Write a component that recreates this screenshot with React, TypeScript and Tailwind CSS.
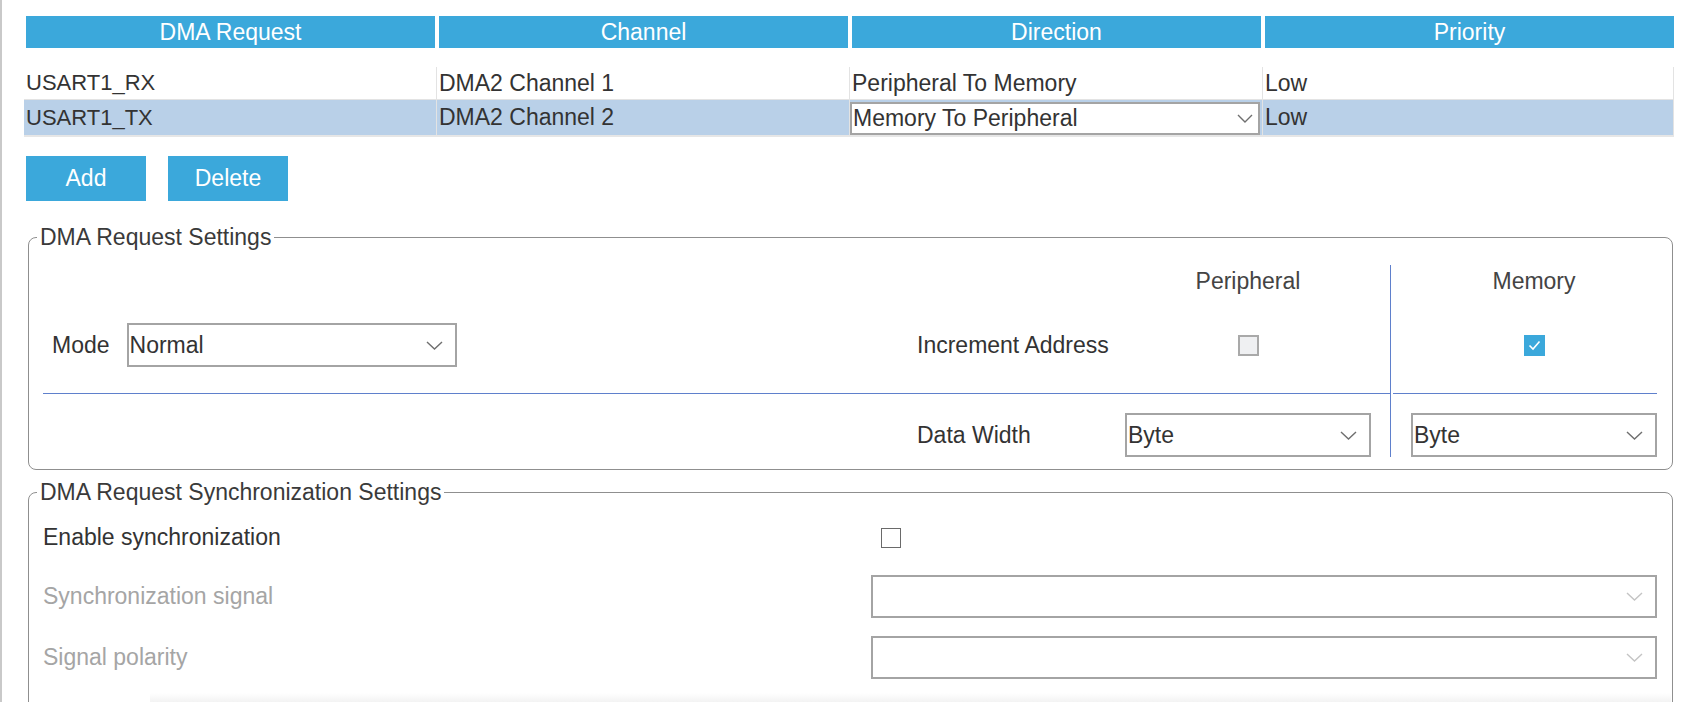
import React from "react";

const LINE = "bg-[#5f80cc]";

function Chevron({ color = "#6f6f6f", w = 17 }: { color?: string; w?: number }) {
  return (
    <svg width={w} height="9" viewBox={`0 0 ${w} 9`} fill="none">
      <path d={`M1 1 L${w / 2} 8 L${w - 1} 1`} stroke={color} strokeWidth="1.4" />
    </svg>
  );
}

function Select({
  text = "",
  className = "",
  disabled = false,
}: {
  text?: string;
  className?: string;
  disabled?: boolean;
}) {
  return (
    <div
      className={`flex items-center justify-between bg-white border-2 border-[#a4a4a4] pl-[1px] pr-[12px] ${className}`}
    >
      <span className="leading-none text-[#333]">{text}</span>
      <Chevron color={disabled ? "#c4c4c4" : "#6f6f6f"} />
    </div>
  );
}

export default function App() {
  const cols = "grid grid-cols-[874px_208px_246px_19px]";
  return (
    <div className="relative w-[1691px] h-[702px] overflow-hidden bg-white shadow-[inset_2px_0_0_#c9c9c9] font-['Liberation_Sans',Arial,sans-serif] text-[23px] text-[#333]">
      <div className="pt-[16px]">
        {/* Header */}
        <div className="ml-[26px] w-[1648px] h-[32px] grid grid-cols-4 gap-x-[4px]">
          {["DMA Request", "Channel", "Direction", "Priority"].map((h) => (
            <div key={h} className="bg-[#3ba8db] text-white flex items-center justify-center leading-none">
              {h}
            </div>
          ))}
        </div>

        {/* Rows */}
        <div className="mt-[19px] ml-[24px] w-[1650px]">
          <div className="grid grid-cols-[413px_413px_413px_411px] h-[33px] border-b border-[#e3e3e3]">
            <div className="border-r border-[#e3e3e3] flex items-center pl-[2px] leading-none text-[22px]">USART1_RX</div>
            <div className="border-r border-[#e3e3e3] flex items-center pl-[2px] leading-none">DMA2 Channel 1</div>
            <div className="border-r border-[#e3e3e3] flex items-center pl-[2px] leading-none">Peripheral To Memory</div>
            <div className="border-r border-[#e3e3e3] flex items-center pl-[2px] leading-none">Low</div>
          </div>
          <div className="grid grid-cols-[413px_413px_413px_411px] h-[37px] bg-[#b9d0e8] border-b-2 border-[#e6e6e6]">
            <div className="border-r border-[#e3e3e3] flex items-center pl-[2px] leading-none text-[22px]">USART1_TX</div>
            <div className="border-r border-[#e3e3e3] flex items-center pl-[2px] leading-none">DMA2 Channel 2</div>
            <div className="border-r border-[#e3e3e3] pt-[2px]">
              <div className="w-[410px] h-[33px] bg-white border-2 border-[#a4a4a4] flex items-center justify-between pl-[1px] pr-[5px]">
                <span className="leading-none">Memory To Peripheral</span>
                <Chevron w={16} />
              </div>
            </div>
            <div className="border-r border-[#e3e3e3] flex items-center pl-[2px] leading-none">Low</div>
          </div>
        </div>

        {/* Buttons */}
        <div className="mt-[19px] ml-[26px] flex gap-[22px]">
          <button className="w-[120px] h-[45px] bg-[#3ba8db] text-white leading-none">Add</button>
          <button className="w-[120px] h-[45px] bg-[#3ba8db] text-white leading-none">Delete</button>
        </div>

        {/* DMA Request Settings */}
        <fieldset className="mt-[23px] ml-[28px] w-[1645px] border border-[#8f8f8f] rounded-[8px] p-0 m-0">
          <legend className="ml-[8px] px-[3px] leading-[26px] text-[#3a3a3a]">DMA Request Settings</legend>
          <div className="flex px-[14px] pt-[15px] pb-[12px]">
            {/* left block */}
            <div className="w-[1347px] flex flex-col">
              <div className={`${cols} h-[32px] items-center`}>
                <div />
                <div />
                <div className="text-center leading-none text-[#444]">Peripheral</div>
                <div />
              </div>
              <div className={`${cols} h-[96px] items-center`}>
                <div className="flex items-center pl-[9px]">
                  <span className="leading-none">Mode</span>
                  <Select text="Normal" className="ml-[17px] w-[330px] h-[44px]" />
                </div>
                <div className="leading-none">Increment Address</div>
                <div className="flex justify-center">
                  <div className="w-[21px] h-[21px] bg-[#eff0f2] border-2 border-[#a9a9a9]" />
                </div>
                <div />
              </div>
              <div className={`h-px ${LINE}`} />
              <div className={`${cols} h-[63px] pt-[19px]`}>
                <div />
                <div className="flex items-center leading-none">Data Width</div>
                <Select text="Byte" className="w-[246px] h-[44px]" />
                <div />
              </div>
            </div>
            {/* vertical divider */}
            <div className={`w-px ${LINE}`} />
            {/* right block */}
            <div className="w-[266px] flex flex-col">
              <div className="h-[32px] pl-[20px] flex items-center">
                <div className="w-[246px] text-center leading-none text-[#444]">Memory</div>
              </div>
              <div className="h-[96px] pl-[20px] flex items-center">
                <div className="w-[246px] flex justify-center">
                  <div className="w-[21px] h-[21px] bg-[#3ba8db] flex items-center justify-center">
                    <svg width="13" height="11" viewBox="0 0 13 11" fill="none">
                      <path d="M1.5 5.5 L5 9 L11.5 1.5" stroke="white" strokeWidth="1.6" />
                    </svg>
                  </div>
                </div>
              </div>
              <div className={`h-px ml-[2px] ${LINE}`} />
              <div className="h-[63px] pt-[19px] pl-[20px]">
                <Select text="Byte" className="w-[246px] h-[44px]" />
              </div>
            </div>
          </div>
        </fieldset>

        {/* DMA Request Synchronization Settings */}
        <fieldset className="mt-[9px] ml-[28px] w-[1645px] border border-[#8f8f8f] rounded-[8px] p-0 m-0">
          <legend className="ml-[8px] px-[3px] leading-[26px] text-[#3a3a3a]">DMA Request Synchronization Settings</legend>
          <div className="flex flex-col pl-[14px] pr-[14px] pt-[16px] pb-[60px]">
            <div className="flex h-[33px] items-center">
              <div className="w-[828px] leading-none">Enable synchronization</div>
              <div className="pl-[10px]">
                <div className="w-[20px] h-[20px] bg-white border-[1.5px] border-[#6a6a6a]" />
              </div>
            </div>
            <div className="flex h-[43px] mt-[21px] items-center">
              <div className="w-[828px] leading-none text-[#a5a5a5]">Synchronization signal</div>
              <Select disabled className="w-[786px] h-[43px]" />
            </div>
            <div className="flex h-[43px] mt-[18px] items-center">
              <div className="w-[828px] leading-none text-[#a5a5a5]">Signal polarity</div>
              <Select disabled className="w-[786px] h-[43px]" />
            </div>
          </div>
        </fieldset>
      </div>

      {/* faint scroll shadow at the bottom edge */}
      <div className="absolute bottom-0 left-[150px] right-[20px] h-[9px] bg-gradient-to-b from-white/0 to-[#f3f3f3]" />
    </div>
  );
}
